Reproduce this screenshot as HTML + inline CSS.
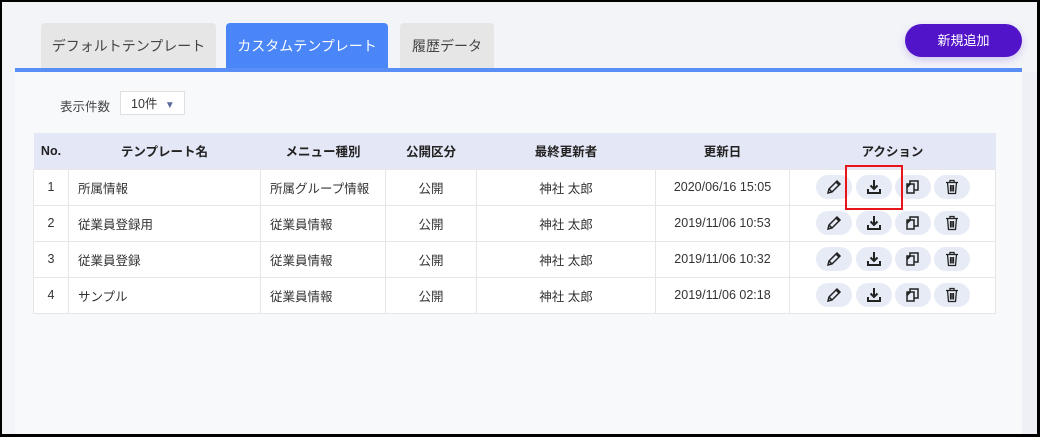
<!DOCTYPE html>
<html><head><meta charset="utf-8"><style>
*{box-sizing:border-box;margin:0;padding:0}
body{width:1040px;height:437px;overflow:hidden;background:#000;font-family:"Liberation Sans","Noto Sans CJK JP",sans-serif;color:#333;font-size:13px;position:relative}
.page{position:absolute;left:2px;top:2px;width:1035px;height:432px;background:#f3f4f8;overflow:hidden}
.a{position:absolute}
.tab{position:absolute;top:21px;height:46px;background:#e6e6e6;border-radius:4px 4px 0 0;font-size:14px;color:#444;text-align:center;line-height:46px}
.panel{position:absolute;left:13px;top:66px;width:1007px;height:370px;background:#f8f9fb;border-top:4px solid #5a8ef7}
table{position:absolute;left:31px;top:131px;border-collapse:collapse;width:963px}
th{background:#e4e7f5;height:36px;font-weight:bold;font-size:12.5px;color:#222}
td{background:#fff;height:36px;border:1px solid #e6e6e6;font-size:12.5px;color:#333}
.c{text-align:center}
.pill{position:absolute;width:36px;height:24px;border-radius:12px;background:#e6ebf5}
.pill svg{position:absolute;left:9px;top:3px}
</style></head><body><div class="page">
<div class="tab" style="left:39px;width:175px">デフォルトテンプレート</div>
<div class="tab" style="left:224px;width:162px;background:#4a86f7;color:#fff">カスタムテンプレート</div>
<div class="tab" style="left:398px;width:94px">履歴データ</div>
<div class="a" style="left:903px;top:22px;width:117px;height:33px;border-radius:17px;background:#5214c8;color:#fff;font-size:13px;text-align:center;line-height:33px;box-shadow:0 3px 8px rgba(100,60,220,.25)">新規追加</div>
<div class="a" style="left:1020px;top:70px;width:15px;height:362px;background:#eef0f6"></div>
<div class="panel"></div>
<div class="a" style="left:58px;top:94px;font-size:12.5px;color:#444">表示件数</div>
<div class="a" style="left:118px;top:89px;width:65px;height:24px;background:#fff;border:1px solid #e0e0e0;font-size:12.5px;line-height:24px;padding-left:10px;color:#333">10件 <span style="color:#5a6a9a;font-size:10px;margin-left:4px">▼</span></div>
<table>
<tr><th style="width:35px">No.</th><th style="width:192px">テンプレート名</th><th style="width:125px">メニュー種別</th><th style="width:91px">公開区分</th><th style="width:179px">最終更新者</th><th style="width:134px">更新日</th><th>アクション</th></tr>
<tr><td class="c">1</td><td style="padding-left:9px">所属情報</td><td style="padding-left:9px">所属グループ情報</td><td class="c">公開</td><td class="c">神社 太郎</td><td class="c">2020/06/16 15:05</td><td></td></tr>
<tr><td class="c">2</td><td style="padding-left:9px">従業員登録用</td><td style="padding-left:9px">従業員情報</td><td class="c">公開</td><td class="c">神社 太郎</td><td class="c">2019/11/06 10:53</td><td></td></tr>
<tr><td class="c">3</td><td style="padding-left:9px">従業員登録</td><td style="padding-left:9px">従業員情報</td><td class="c">公開</td><td class="c">神社 太郎</td><td class="c">2019/11/06 10:32</td><td></td></tr>
<tr><td class="c">4</td><td style="padding-left:9px">サンプル</td><td style="padding-left:9px">従業員情報</td><td class="c">公開</td><td class="c">神社 太郎</td><td class="c">2019/11/06 02:18</td><td></td></tr>
</table>
<div id="acts"></div>
<div class="a" style="left:843px;top:163px;width:58px;height:45px;border:2px solid #e8141a"></div>
</div>
<script>
var ys=[173,209,245,281],xs=[814,854,893,932];
var ic=[
'<path d="M3 15l1-4 8-8 3 3-8 8z M4 11l3 3 M11 4l3 3" fill="none" stroke="#222" stroke-width="1.5"/>',
'<path d="M9 2v9 M5.5 7.5l3.5 3.5 3.5-3.5 M3 11v4h12v-4" fill="none" stroke="#222" stroke-width="2"/>',
'<path d="M3 6h7v9H3z M6 6V3h8v9h-4" fill="none" stroke="#222" stroke-width="1.5"/><path d="M3 9l3-3" stroke="#222" stroke-width="2"/>',
'<path d="M3 4.5h12 M7 4.5V2.5h4v2 M4.5 4.5l1 11h7l1-11 M7.5 7v6.5 M9 7v6.5 M10.5 7v6.5" fill="none" stroke="#222" stroke-width="1.3"/>'];
var h='';ys.forEach(function(y){xs.forEach(function(x,i){h+='<div class="pill" style="left:'+x+'px;top:'+y+'px"><svg width="18" height="18" viewBox="0 0 18 18">'+ic[i]+'</svg></div>';});});
document.getElementById('acts').innerHTML=h;
</script>
</body></html>
